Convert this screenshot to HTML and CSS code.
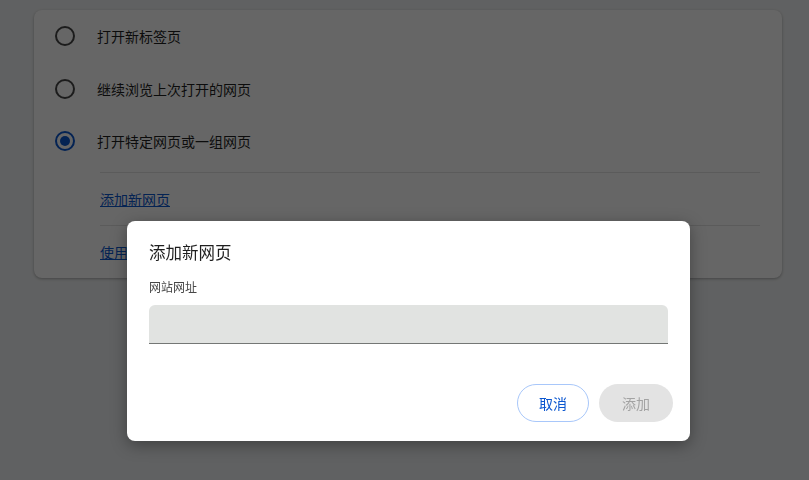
FILE: index.html
```html
<!DOCTYPE html>
<html lang="zh-CN">
<head>
<meta charset="utf-8">
<title>添加新网页</title>
<link rel="stylesheet" href="styles.css">
</head>
<body>
<div class="card">
  <div class="radios">
    <div class="row"><span class="radio"></span><span class="label">打开新标签页</span></div>
    <div class="row"><span class="radio"></span><span class="label">继续浏览上次打开的网页</span></div>
    <div class="row"><span class="radio checked"></span><span class="label">打开特定网页或一组网页</span></div>
  </div>
  <div class="sub"><a class="link">添加新网页</a></div>
  <div class="sub"><a class="link">使用当前网页</a></div>
</div>
<div class="scrim"></div>
<div class="dialog">
  <div class="title">添加新网页</div>
  <div class="field-label">网站网址</div>
  <div class="input"></div>
  <div class="buttons">
    <button class="btn cancel">取消</button>
    <button class="btn add">添加</button>
  </div>
</div>
</body>
</html>
```
FILE: styles.css
```css
html, body {
  margin: 0;
  padding: 0;
}
body {
  background: #f1f3f4;
  font-family: "Noto Sans CJK SC", "Noto Sans", sans-serif;
  color: #1f1f1f;
  width: 809px;
  height: 480px;
  overflow: hidden;
  padding: 10px 0 0 34px;
  box-sizing: border-box;
}
.card {
  width: 748px;
  height: 268px;
  background: #fff;
  border-radius: 8px;
  box-shadow: 0 1px 3px rgba(0,0,0,0.3);
  box-sizing: border-box;
  padding-left: 21px;
}
.radios {
  padding-bottom: 4.5px;
}
.row {
  height: 52.5px;
  display: flex;
  align-items: center;
}
.radio {
  width: 20px;
  height: 20px;
  border: 2px solid #474747;
  border-radius: 50%;
  box-sizing: border-box;
  margin-right: 22px;
  display: flex;
  align-items: center;
  justify-content: center;
}
.radio.checked {
  border-color: #0b57d0;
}
.radio.checked::after {
  content: "";
  width: 10px;
  height: 10px;
  border-radius: 50%;
  background: #0b57d0;
}
.label {
  font-size: 14px;
}
.sub {
  margin-left: 45px;
  margin-right: 22px;
  border-top: 1px solid #e3e3e3;
  height: 52px;
  display: flex;
  align-items: center;
}
.link {
  font-size: 14px;
  color: #0b57d0;
  text-decoration: underline;
}
.scrim {
  position: fixed;
  inset: 0;
  background: rgba(0,0,0,0.6);
}
.dialog {
  position: absolute;
  left: 127px;
  top: 221px;
  width: 563px;
  height: 220px;
  background: #fff;
  border-radius: 8px;
  box-shadow: 0 4px 16px rgba(0,0,0,0.35);
  box-sizing: border-box;
  padding: 17px 17px 0 22px;
  display: flex;
  flex-direction: column;
}
.title {
  font-size: 16.5px;
  line-height: 28px;
  color: #1f1f1f;
}
.field-label {
  margin-top: 13px;
  font-size: 12px;
  line-height: 16px;
  color: #474747;
}
.input {
  margin-top: 10px;
  width: 519px;
  height: 38px;
  background: #e1e3e1;
  border-bottom: 1px solid #747775;
  border-radius: 6px 6px 0 0;
}
.buttons {
  margin-top: 40px;
  display: flex;
  justify-content: flex-end;
  gap: 10px;
}
.btn {
  font-family: "Noto Sans CJK SC", "Noto Sans", sans-serif;
  font-size: 14px;
  height: 38px;
  border-radius: 19px;
  box-sizing: border-box;
  padding: 0;
}
.cancel {
  width: 72px;
  background: #fff;
  border: 1px solid #a8c7fa;
  color: #0b57d0;
}
.add {
  width: 74px;
  background: #e3e3e3;
  border: none;
  color: #a3a3a3;
}
```
